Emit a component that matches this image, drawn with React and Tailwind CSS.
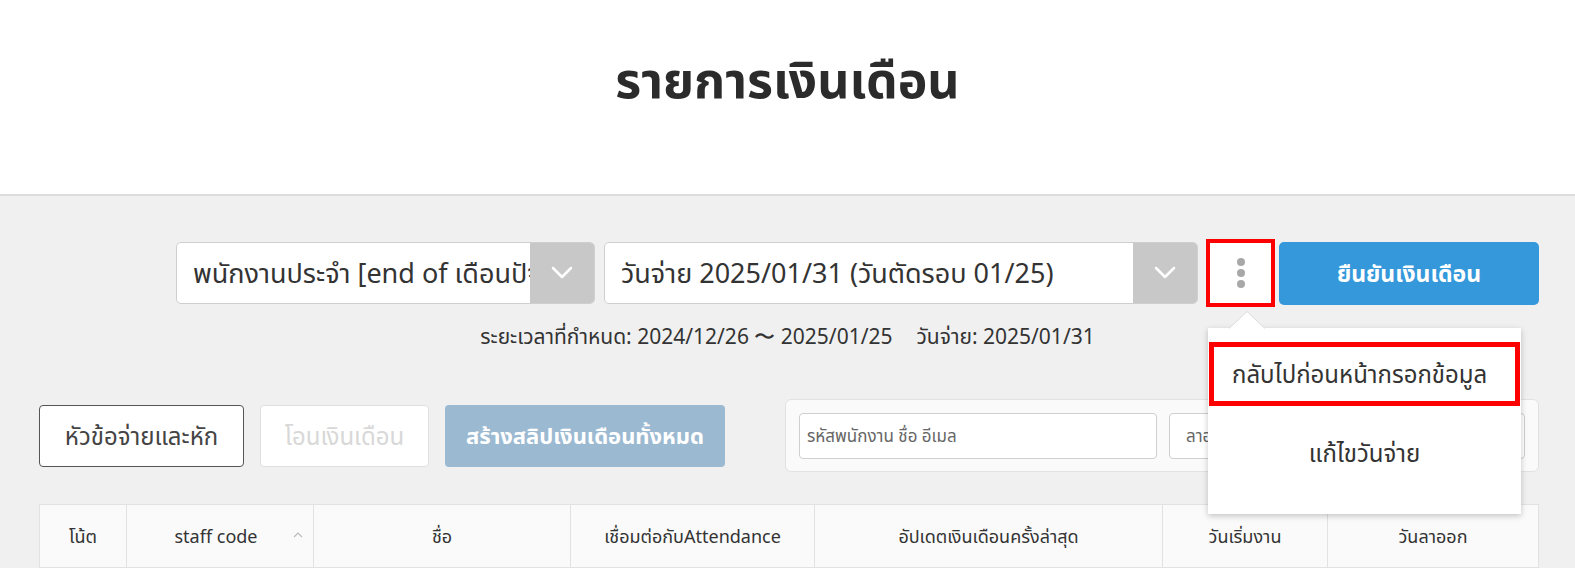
import React from "react";

function Chevron() {
  return (
    <svg width="22" height="14" viewBox="0 0 22 14" fill="none">
      <path d="M2 2 L11 11 L20 2" stroke="white" strokeWidth="2.5" strokeLinecap="round" strokeLinejoin="round" />
    </svg>
  );
}

function Select({ w, text }) {
  return (
    <div className={`flex h-[62px] ${w} overflow-hidden rounded-[5px] border border-[#cfcfcf] bg-white`}>
      <div className="flex min-w-0 flex-1 items-center overflow-hidden whitespace-nowrap pl-[16px] text-[27px] text-[#333]">
        {text}
      </div>
      <div className="flex w-[64px] shrink-0 items-center justify-center bg-[#c8c8c8]">
        <Chevron />
      </div>
    </div>
  );
}

export default function App() {
  const cols = [
    { w: "w-[86px]", t: "โน้ต" },
    { w: "w-[187px]", t: "staff code", sort: true },
    { w: "w-[257px]", t: "ชื่อ" },
    { w: "w-[244px]", t: "เชื่อมต่อกับAttendance" },
    { w: "w-[348px]", t: "อัปเดตเงินเดือนครั้งล่าสุด" },
    { w: "w-[165px]", t: "วันเริ่มงาน" },
    { w: "flex-1", t: "วันลาออก" },
  ];
  return (
    <div
      className="min-h-screen bg-[#f0f0f0] text-[#333]"
      style={{ fontFamily: '"Noto Sans", "Noto Sans Thai", "Liberation Sans", sans-serif' }}
    >
      <header className="flex h-[196px] justify-center border-b-2 border-[#dcdcdc] bg-white pt-[45px]">
        <h1 className="text-[50px] font-bold leading-[68px] text-[#2b2b2b]">รายการเงินเดือน</h1>
      </header>

      <main className="px-[36px] pt-[43px]">
        <div className="flex items-center justify-end">
          <Select w="w-[419px]" text="พนักงานประจำ [end of เดือนปัจจุบัน]" />
          <div className="w-[9px]" />
          <Select w="w-[594px]" text="วันจ่าย 2025/01/31 (วันตัดรอบ 01/25)" />
          <div className="w-[8px]" />
          <div className="relative">
            <div className="flex h-[68px] w-[69px] flex-col items-center justify-center gap-[3px] border-[4px] border-[#ff0000] bg-white">
              <span className="h-[8px] w-[8px] rounded-full bg-[#a8a8a8]" />
              <span className="h-[8px] w-[8px] rounded-full bg-[#a8a8a8]" />
              <span className="h-[8px] w-[8px] rounded-full bg-[#a8a8a8]" />
            </div>
            <div className="absolute left-[2px] top-[89px] z-20 w-[313px] bg-white py-[14px] shadow-[0_2px_6px_rgba(0,0,0,0.22)]">
              <svg className="absolute left-[21px] top-[-17px]" width="36" height="18" viewBox="0 0 36 18">
                <path d="M0 17.5 L18 0.5 L36 17.5" fill="white" stroke="#dcdcdc" strokeWidth="1" />
              </svg>
              <div className="mx-[1px] flex h-[64px] items-center border-[5px] border-[#ff0000] pl-[18px] text-[24px] text-[#333]">
                กลับไปก่อนหน้ากรอกข้อมูล
              </div>
              <div className="flex h-[94px] items-center justify-center text-[24px] text-[#333]">แก้ไขวันจ่าย</div>
            </div>
          </div>
          <div className="w-[4px]" />
          <div className="flex h-[63px] w-[260px] items-center justify-center rounded-[5px] bg-[#3498db] text-[23px] font-bold text-white">
            ยืนยันเงินเดือน
          </div>
        </div>

        <div className="mt-[15px] flex justify-center text-[21px] leading-[29px] text-[#333]">
          <span>ระยะเวลาที่กำหนด: 2024/12/26 〜 2025/01/25</span>
          <span className="ml-[24px]">วันจ่าย: 2025/01/31</span>
        </div>

        <div className="mt-[48px] flex items-center pl-[3px]">
          <div className="flex h-[62px] w-[205px] items-center justify-center rounded-[4px] border border-[#555] bg-white text-[24px] text-[#444]">
            หัวข้อจ่ายและหัก
          </div>
          <div className="ml-[16px] flex h-[62px] w-[169px] items-center justify-center rounded-[4px] border border-[#e0e0e0] bg-white text-[24px] text-[#d8d8d8]">
            โอนเงินเดือน
          </div>
          <div className="ml-[16px] flex h-[62px] w-[280px] items-center justify-center rounded-[4px] bg-[#9bb9d1] text-[22px] font-bold text-white">
            สร้างสลิปเงินเดือนทั้งหมด
          </div>
          <div className="ml-auto flex h-[73px] w-[754px] items-center gap-[12px] rounded-[6px] border border-[#e2e2e2] bg-[#fafafa] px-[13px]">
            <div className="flex h-[46px] w-[358px] items-center rounded-[4px] border border-[#cfcfcf] bg-white pl-[7px] text-[17px] text-[#666]">
              รหัสพนักงาน ชื่อ อีเมล
            </div>
            <div className="flex h-[46px] flex-1 items-center rounded-[4px] border border-[#cfcfcf] bg-white pl-[16px] text-[17px] text-[#666]">
              ลาออก
            </div>
          </div>
        </div>

        <div className="ml-[3px] mt-[32px] flex h-[64px] border border-[#e2e2e2] bg-[#fafafa]">
          {cols.map((c, i) => (
            <div
              key={i}
              className={`relative flex ${c.w} items-center justify-center text-[18px] text-[#333] ${i > 0 ? "border-l border-[#e2e2e2]" : ""}`}
            >
              <span className={c.sort ? "-ml-[8px]" : ""}>{c.t}</span>
              {c.sort && (
                <svg className="absolute right-[10px] top-[27px]" width="10" height="6" viewBox="0 0 10 6">
                  <path d="M1 5 L5 1 L9 5" stroke="#bbb" strokeWidth="1.2" fill="none" />
                </svg>
              )}
            </div>
          ))}
        </div>
      </main>
    </div>
  );
}
